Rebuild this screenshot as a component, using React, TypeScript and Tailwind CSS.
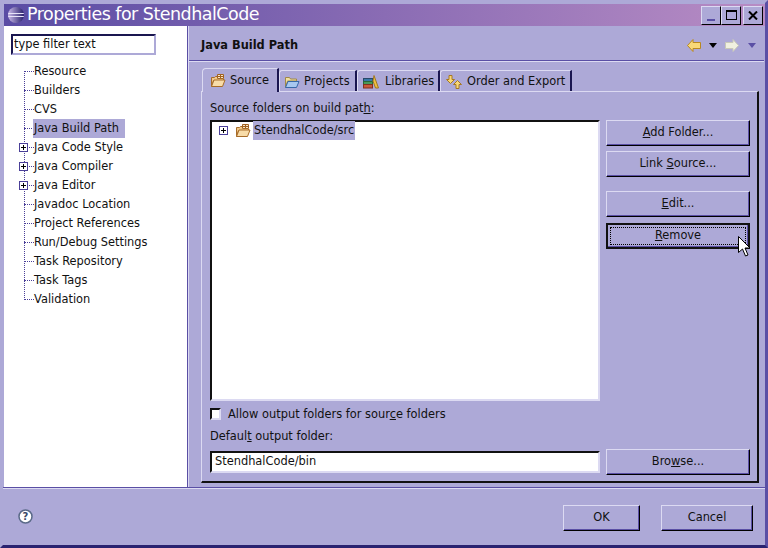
import React from "react";

const font = { fontFamily: '"DejaVu Sans", sans-serif' };

function SrcFolder() {
  return (
    <svg width="16" height="14" viewBox="0 0 16 14" className="shrink-0">
      <path d="M1.500 3.500h3l1-1h2v2h6v2h-10l-2 6z" fill="#f0c888" stroke="#a86c28" />
      <path d="M1.500 12.500l2.500-6.500h11l-2.500 6.500z" fill="#f8dca8" stroke="#a86c28" />
      <path d="M7.500 4V0.500h6V4M10.500 .5V4M7.500 2.500h6" fill="#f8e8c8" stroke="#a06020" />
    </svg>
  );
}
function BlueFolder() {
  return (
    <svg width="16" height="14" viewBox="0 0 16 14" className="shrink-0">
      <path d="M1.500 2.500h4l1 1.500h6v2h-9l-2 6.500z" fill="#f0e0a0" stroke="#a08848" />
      <path d="M1.500 12.500l2.500-6h11l-2.500 6z" fill="#a8c8f0" stroke="#3868a8" />
    </svg>
  );
}
function Books() {
  return (
    <svg width="16" height="14" viewBox="0 0 16 14" className="shrink-0">
      <rect x="0.500" y="3.500" width="9" height="3" fill="#3878a8" stroke="#284868" />
      <rect x="0.500" y="6.500" width="9" height="3" fill="#489858" stroke="#286838" />
      <rect x="0.500" y="9.500" width="9" height="3.500" fill="#c85838" stroke="#803020" />
      <path d="M11 0.500l4.500 12.500h-3l-2.500-7z" fill="#f0c040" stroke="#a07820" />
    </svg>
  );
}
function OrderArrows() {
  return (
    <svg width="16" height="14" viewBox="0 0 16 14" className="shrink-0">
      <path d="M3 .5h3v4h2.500L4.500 8.500.5 4.500H3z" fill="#f8d878" stroke="#a87820" />
      <path d="M10 13.500v-4H7.500l4-4 4 4H13v4z" fill="#f8d878" stroke="#a87820" />
    </svg>
  );
}
function Plus() {
  return (
    <svg width="9" height="9" viewBox="0 0 9 9" className="shrink-0">
      <rect x="0.500" y="0.500" width="8" height="8" fill="#fff" stroke="#4a3f98" />
      <path d="M2 4.500h5M4.500 2v5" stroke="#000" />
    </svg>
  );
}
function Arrow({ dir, fill, stroke }: { dir: "l" | "r"; fill: string; stroke: string }) {
  return (
    <svg width="14" height="13" viewBox="0 0 14 13" className="shrink-0">
      <path
        d={dir === "l" ? "M.5 6.500L6 .5v3h7.500v6H6v3z" : "M13.500 6.500L8 .5v3H.5v6H8v3z"}
        fill={fill}
        stroke={stroke}
      />
    </svg>
  );
}

const btn =
  "flex items-center justify-center border border-t-[#dcdaf2] border-l-[#dcdaf2] border-r-black border-b-black shadow-[inset_-1px_-1px_0_#5a4fa5] text-[#111]";

function Button({ children, className = "" }: { children: React.ReactNode; className?: string }) {
  return <div className={`${btn} ${className}`}>{children}</div>;
}

const treeItems: [string, boolean, boolean][] = [
  ["Resource", false, false],
  ["Builders", false, false],
  ["CVS", false, false],
  ["Java Build Path", false, true],
  ["Java Code Style", true, false],
  ["Java Compiler", true, false],
  ["Java Editor", true, false],
  ["Javadoc Location", false, false],
  ["Project References", false, false],
  ["Run/Debug Settings", false, false],
  ["Task Repository", false, false],
  ["Task Tags", false, false],
  ["Validation", false, false],
];

function Tab({ icon, label, active, className = "" }: { icon: React.ReactNode; label: string; active?: boolean; className?: string }) {
  return (
    <div
      className={
        (active
          ? "flex items-center h-[24px] pl-[7px] rounded-tl-[4px] border-t border-l border-[#dcdaf2] border-r-2 border-r-[#1a1650] bg-[#ada9d7] relative top-[1px] z-10 "
          : "flex items-center h-[21px] pt-[2px] rounded-tl-[3px] border-t border-l border-[#dcdaf2] border-r-2 border-r-[#1a1650] ") + className
      }
    >
      {icon}
      <span>{label}</span>
    </div>
  );
}

export default function App() {
  return (
    <div
      style={font}
      className="w-[768px] h-[548px] flex flex-col bg-[#ada9d7] border-[3px] border-[#ada9d7] border-r-[#5a4fa5] border-b-[#2a2370] text-[11.4px] text-[#111] overflow-hidden relative"
    >
      {/* Title bar */}
      <div className="h-[22px] mt-[1px] ml-[1px] shrink-0 flex items-center bg-gradient-to-r from-[#5a4ca4] via-[#8a6cb4] to-[#b88cc4] text-white">
        <svg width="18" height="18" viewBox="0 0 18 18" className="ml-[3px] mr-[2px] shrink-0">
          <defs>
            <linearGradient id="ec" x1="0" x2="1" y1="0" y2="0">
              <stop offset="0" stopColor="#c8b8e8" />
              <stop offset="1" stopColor="#28206c" />
            </linearGradient>
          </defs>
          <circle cx="9" cy="9" r="8" fill="url(#ec)" />
          <path d="M1.200 7.500h15.600M1.200 10.500h15.600" stroke="#e8e4f8" strokeWidth="1.200" />
        </svg>
        <span className="text-[17.5px] tracking-[-0.52px] leading-none whitespace-nowrap">Properties for StendhalCode</span>
        <div className="ml-auto mr-[2px] flex items-center text-black">
          <div className="w-[20px] h-[19px] bg-[#ada9d7] border border-[#dcdaf2] border-r-black border-b-black flex items-end justify-center pb-[3px]">
            <div className="w-[8px] h-[2px] bg-[#5a4fa5]" />
          </div>
          <div className="w-[20px] h-[19px] bg-[#ada9d7] border border-[#dcdaf2] border-r-black border-b-black flex items-center justify-center">
            <div className="w-[11px] h-[10px] border border-black border-t-2" />
          </div>
          <div className="w-[20px] h-[19px] ml-[2px] bg-[#ada9d7] border border-[#dcdaf2] border-r-black border-b-black flex items-center justify-center">
            <svg width="10" height="9" viewBox="0 0 10 9">
              <path d="M1 0.500l8 8M9 0.500l-8 8" stroke="#000" strokeWidth="2" />
            </svg>
          </div>
        </div>
      </div>

      {/* Main */}
      <div className="h-[462px] shrink-0 flex border-b border-[#5a4fa5] shadow-[0_1px_0_#dcdaf2]">
        {/* Sidebar */}
        <div className="w-[183px] ml-[1px] bg-white pt-[8px] pl-[7px] shrink-0">
          <div className="w-[145px] h-[21px] flex items-center pl-[1px] bg-white border-2 border-t-[#1a1650] border-l-[#1a1650] border-r-[#ada9d7] border-b-[#ada9d7] whitespace-nowrap">
            type filter text
          </div>
          <div className="relative mt-[7px] ml-[13px]">
            <div className="absolute left-0 top-[9px] h-[229px] border-l border-dotted border-[#4a3f98]" />
            {treeItems.map(([label, expand, selected]) => (
              <div key={label} className="h-[19px] flex items-center relative">
                <div className="w-[10px] border-t border-dotted border-[#4a3f98] shrink-0" />
                {expand && (
                  <div className="absolute left-[-5px] top-[5px]">
                    <Plus />
                  </div>
                )}
                <div className={`ml-[-1px] h-[19px] flex items-center pl-[1px] pr-[6px] whitespace-nowrap ${selected ? "bg-[#ada9d7]" : ""}`}>
                  {label}
                </div>
              </div>
            ))}
          </div>
        </div>
        {/* Divider */}
        <div className="w-[2px] shrink-0 bg-[#5a4fa5] border-r border-[#dcdaf2]" />

        {/* Right pane */}
        <div className="flex-1 min-w-0 flex flex-col">
          <div className="h-[35px] shrink-0 flex items-center pt-[5px] pl-[12px] pr-[8px] border-b border-[#5a4fa5] shadow-[0_1px_0_#dcdaf2] mr-[1px]">
            <span className="font-bold">Java Build Path</span>
            <div className="ml-auto flex items-center">
              <Arrow dir="l" fill="#f8d878" stroke="#b88820" />
              <svg width="8" height="5" viewBox="0 0 8 5" className="ml-[8px]"><path d="M0 0h8L4 5z" fill="#000" /></svg>
              <div className="ml-[8px]"><Arrow dir="r" fill="#f0f0e0" stroke="#c8c8b8" /></div>
              <svg width="8" height="5" viewBox="0 0 8 5" className="ml-[9px]"><path d="M0 0h8L4 5z" fill="#5a4fa5" /></svg>
            </div>
          </div>

          <div className="ml-[12px] mr-[6px] mt-[6px] flex flex-col">
            <div className="flex items-end h-[24px] pl-[1px] relative">
              <Tab icon={<SrcFolder />} label="Source" active className="w-[77px] gap-[4px]" />
              <Tab icon={<BlueFolder />} label="Projects" className="w-[78px] pl-[4px] gap-[4px] tracking-[0.1px]" />
              <Tab icon={<Books />} label="Libraries" className="w-[83px] pl-[5px] gap-[6px]" />
              <Tab icon={<OrderArrows />} label="Order and Export" className="w-[132px] pl-[5px] gap-[5px]" />
            </div>
            <div className="h-[392px] border border-t-[#dcdaf2] border-l-[#dcdaf2] border-r-2 border-b-2 border-r-[#111] border-b-[#111] pl-[8px] pr-[7px] flex flex-col">
              <div className="h-[14px] mt-[9px] leading-[14px] whitespace-nowrap">
                Source folders on build pat<u>h</u>:
              </div>
              <div className="flex gap-[6px] mt-[5px]">
                <div className="w-[390px] h-[281px] bg-white border-2 border-t-[#111] border-l-[#111] border-r-[#dcdaf2] border-b-[#dcdaf2] pl-[7px]">
                  <div className="flex items-center h-[19px] mt-[-1px]">
                    <Plus />
                    <div className="ml-[7px] mr-[2px]"><SrcFolder /></div>
                    <span className="bg-[#ada9d7] h-[19px] leading-[19px] px-[1px] whitespace-nowrap">StendhalCode/src</span>
                  </div>
                </div>
                <div className="w-[144px] flex flex-col">
                  <Button className="h-[26px]"><span><u>A</u>dd Folder...</span></Button>
                  <Button className="h-[26px] mt-[5px]"><span>Link <u>S</u>ource...</span></Button>
                  <Button className="h-[26px] mt-[14px]"><span><u>E</u>dit...</span></Button>
                  <div className="h-[26px] mt-[6px] border-2 border-[#111] shadow-[inset_-1px_-1px_0_#5a4fa5] p-[2px]">
                    <div className="h-full border border-dotted border-black flex items-center justify-center">
                      <span><u>R</u>emove</span>
                    </div>
                  </div>
                </div>
              </div>
              <div className="flex items-center h-[14px] mt-[7px]">
                <div className="w-[11px] h-[12px] mt-[-2px] bg-white border-2 border-t-[#111] border-l-[#111] border-r-[#dcdaf2] border-b-[#dcdaf2] shrink-0" />
                <span className="ml-[7px] whitespace-nowrap">Allow output folders for sour<u>c</u>e folders</span>
              </div>
              <div className="h-[14px] mt-[7px] leading-[14px] whitespace-nowrap">
                Defaul<u>t</u> output folder:
              </div>
              <div className="flex gap-[6px] mt-[6px]">
                <div className="w-[390px] h-[22px] mt-[2px] bg-white border-2 border-t-[#111] border-l-[#111] border-r-[#dcdaf2] border-b-[#dcdaf2] pl-[3px] flex items-center whitespace-nowrap">
                  StendhalCode/bin
                </div>
                <Button className="w-[144px] h-[26px]"><span>Bro<u>w</u>se...</span></Button>
              </div>
            </div>
          </div>
        </div>
      </div>

      {/* Bottom bar */}
      <div className="flex-1 flex items-center pt-[2px] pl-[15px] pr-[12px]">
        <svg width="15" height="15" viewBox="0 0 15 15" className="shrink-0 mb-[2px]">
          <circle cx="7.500" cy="7.500" r="6.500" fill="#fff" stroke="#5a6a88" strokeWidth="1.500" />
          <text x="7.500" y="11" textAnchor="middle" fontSize="10" fontWeight="bold" fill="#3a4a68" fontFamily="DejaVu Sans">?</text>
        </svg>
        <div className="ml-auto flex gap-[21px]">
          <Button className="w-[77px] h-[26px]">OK</Button>
          <Button className="w-[92px] h-[26px]">Cancel</Button>
        </div>
      </div>

      {/* Mouse cursor */}
      <svg width="14" height="21" viewBox="0 0 14 21" className="absolute left-[735px] top-[233px]">
        <path d="M.5.5v16l4-3.500 3 7 2.500-1-3-7h5z" fill="#fff" stroke="#000" />
      </svg>
    </div>
  );
}
